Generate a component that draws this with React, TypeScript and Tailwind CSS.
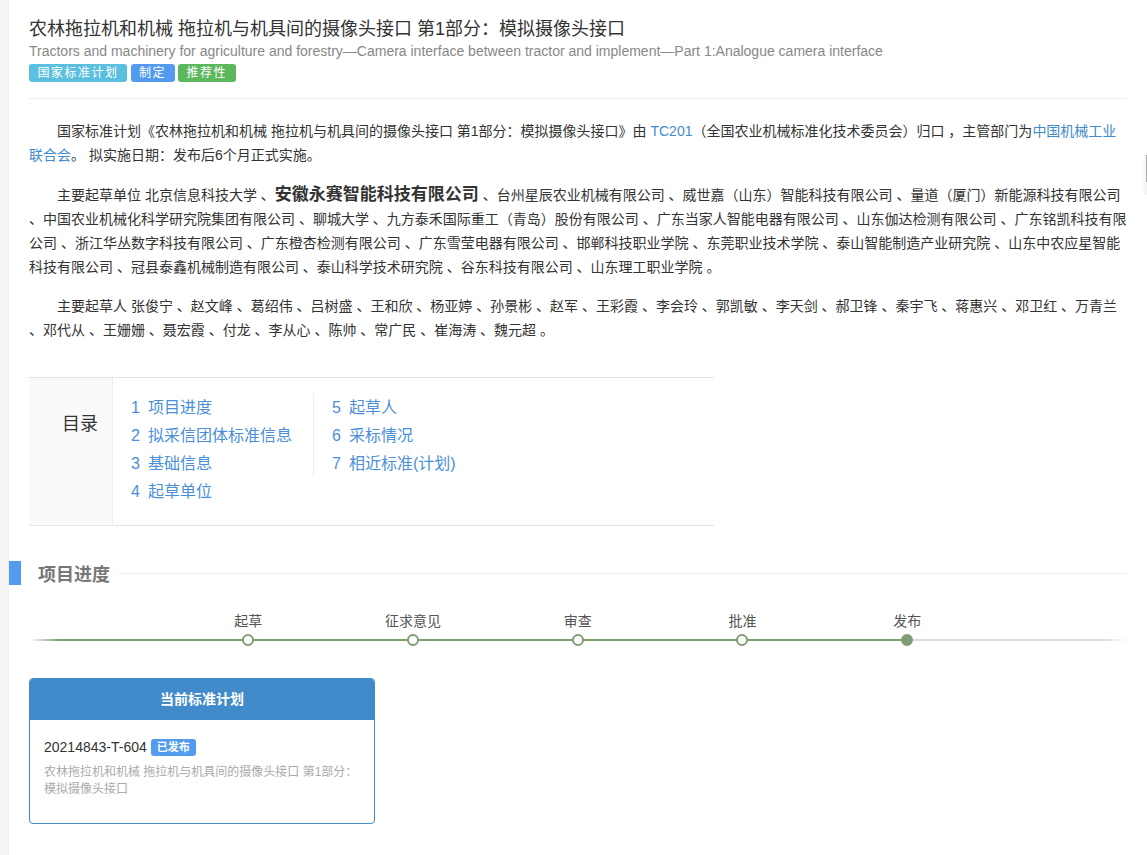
import React from "react"

const FONT = '"Liberation Sans", "Noto Sans CJK SC", sans-serif'

const units = ["台州星辰农业机械有限公司", "威世嘉（山东）智能科技有限公司", "量道（厦门）新能源科技有限公司", "中国农业机械化科学研究院集团有限公司", "聊城大学", "九方泰禾国际重工（青岛）股份有限公司", "广东当家人智能电器有限公司", "山东伽达检测有限公司", "广东铭凯科技有限公司", "浙江华丛数字科技有限公司", "广东橙杏检测有限公司", "广东雪莹电器有限公司", "邯郸科技职业学院", "东莞职业技术学院", "泰山智能制造产业研究院", "山东中农应星智能科技有限公司", "冠县泰鑫机械制造有限公司", "泰山科学技术研究院", "谷东科技有限公司", "山东理工职业学院"]

const people = ["张俊宁", "赵文峰", "葛绍伟", "吕树盛", "王和欣", "杨亚婷", "孙景彬", "赵军", "王彩霞", "李会玲", "郭凯敏", "李天剑", "郝卫锋", "秦宇飞", "蒋惠兴", "邓卫红", "万青兰", "邓代从", "王姗姗", "聂宏霞", "付龙", "李从心", "陈帅", "常广民", "崔海涛", "魏元超"]

const tocLeft = ["项目进度", "拟采信团体标准信息", "基础信息", "起草单位"]
const tocRight = ["起草人", "采标情况", "相近标准(计划)"]
const steps = ["起草", "征求意见", "审查", "批准", "发布"]

function Badge({ className, children }: { className: string; children: React.ReactNode }) {
  return (
    <span className={`inline-block h-[18px] rounded-[3px] px-[8.5px] text-[12px] leading-[18px] tracking-[1.5px] text-white ${className}`}>
      {children}
    </span>
  )
}

function TocItem({ n, label }: { n: number; label: string }) {
  return (
    <a className="flex h-[28px] items-center pt-[2px] text-[16px] text-[#4a90d9]">
      <span className="w-[17px]">{n}</span>
      {label}
    </a>
  )
}

export default function App() {
  return (
    <div className="flex min-h-[855px] bg-white" style={{ fontFamily: FONT }}>
      <div className="w-[9px] shrink-0 border-r border-[#eeeeee] bg-[#f5f5f5]" />
      <main className="w-[1118px] pt-[17px]">
        <div className="ml-[20px] border-b border-[#eeeeee] pb-[16px]">
          <h1 className="text-[18px] leading-[24px] font-normal text-[#333333]">
            农林拖拉机和机械 拖拉机与机具间的摄像头接口 第1部分：模拟摄像头接口
          </h1>
          <p className="text-[14px] leading-[20px] text-[#888888]">
            Tractors and machinery for agriculture and forestry—Camera interface between tractor and implement—Part 1:Analogue camera interface
          </p>
          <div className="mt-[3px] flex gap-[3.5px]">
            <Badge className="bg-[#5bc0de]">国家标准计划</Badge>
            <Badge className="bg-[#529bee]">制定</Badge>
            <Badge className="bg-[#5cb85c]">推荐性</Badge>
          </div>
        </div>

        <div className="ml-[20px] pt-[20px] text-[14px] leading-[24px] text-[#333333]">
          <p className="indent-[28px]">
            国家标准计划《农林拖拉机和机械 拖拉机与机具间的摄像头接口 第1部分：模拟摄像头接口》由 <a className="text-[#428bca]">TC201</a>（全国农业机械标准化技术委员会）归口 ，主管部门为<a className="text-[#428bca]">中国机械工业联合会</a>。 拟实施日期：发布后6个月正式实施。
          </p>
          <p className="mt-[16px] indent-[28px]">
            主要起草单位 北京信息科技大学 、<b className="text-[17px]">安徽永赛智能科技有限公司</b> 、
            {units.map((u, i) => (
              <React.Fragment key={u}>
                {u}
                {i < units.length - 1 ? (
                  <>
                    {" "}
                    <wbr />、
                  </>
                ) : (
                  " 。"
                )}
              </React.Fragment>
            ))}
          </p>
          <p className="mt-[15px] indent-[28px]">主要起草人 {people.join(" 、")} 。</p>
        </div>

        <div className="mt-[35px] ml-[20px] flex h-[149px] w-[685px] border-y border-[#e4e4e4]">
          <div className="w-[84px] shrink-0 border-r border-[#eeeeee] bg-[#fafafa] pt-[32px] pr-[14px] text-right text-[18px] leading-[28px] text-[#333333]">
            目录
          </div>
          <div className="flex pt-[15px] pl-[18px]">
            <div className="w-[182px]">
              {tocLeft.map((label, i) => (
                <TocItem key={label} n={i + 1} label={label} />
              ))}
            </div>
            <div className="h-[84px] border-l border-[#eeeeee] pl-[18px]">
              {tocRight.map((label, i) => (
                <TocItem key={label} n={i + 5} label={label} />
              ))}
            </div>
          </div>
        </div>

        <div className="mt-[35px] flex h-[24px] items-center">
          <div className="h-[24px] w-[12px] bg-[#529bee]" />
          <h2 className="ml-[17px] pt-[5px] text-[18px] font-bold text-[#777777]">项目进度</h2>
          <div className="ml-[9px] h-px flex-1 bg-[#eeeeee]" />
        </div>

        <div className="relative mt-[26px] ml-[20px] flex h-[41px] pr-[137.5px] pl-[137px]">
          <div className="absolute inset-x-0 top-[28px] h-[2px] bg-[linear-gradient(to_right,transparent_0,#7f9f73_30px,#7f9f73_80%,#dddddd_80%,#dddddd_98%,transparent_100%)]" />
          {steps.map((s, i) => (
            <div key={s} className="relative flex flex-1 flex-col items-center">
              <span className="h-[20px] text-[14px] leading-[20px] text-[#555555]">{s}</span>
              <span className={`mt-[3px] h-[12px] w-[12px] rounded-full border-2 border-[#7f9f73] ${i === 4 ? "bg-[#7f9f73]" : "bg-white"}`} />
            </div>
          ))}
        </div>

        <div className="mt-[26px] ml-[20px] h-[146px] w-[346px] overflow-hidden rounded-[4px] border border-[#428bca]">
          <div className="flex h-[41px] items-center justify-center bg-[#428bca] pb-[1px] text-[14px] font-bold text-white">
            当前标准计划
          </div>
          <div className="px-[14px] pt-[17px]">
            <div className="flex h-[20px] items-center text-[14px] text-[#333333]">
              20214843-T-604
              <span className="ml-[4px] h-[17px] rounded-[3px] bg-[#529bee] px-[6px] text-[11px] leading-[17px] font-bold text-white">已发布</span>
            </div>
            <p className="mt-[7px] text-[12px] leading-[17px] text-[#aaaaaa]">
              农林拖拉机和机械 拖拉机与机具间的摄像头接口 第1部分：模拟摄像头接口
            </p>
          </div>
        </div>
      </main>
      <div className="flex flex-1 justify-end">
        <div className="mt-[155px] h-[40px] w-[5px] bg-[linear-gradient(to_right,#ffffff,#f0f0f0)]">
          <div className="ml-auto h-[27px] w-[1px] bg-[#aaaaaa]" />
        </div>
      </div>
    </div>
  )
}
